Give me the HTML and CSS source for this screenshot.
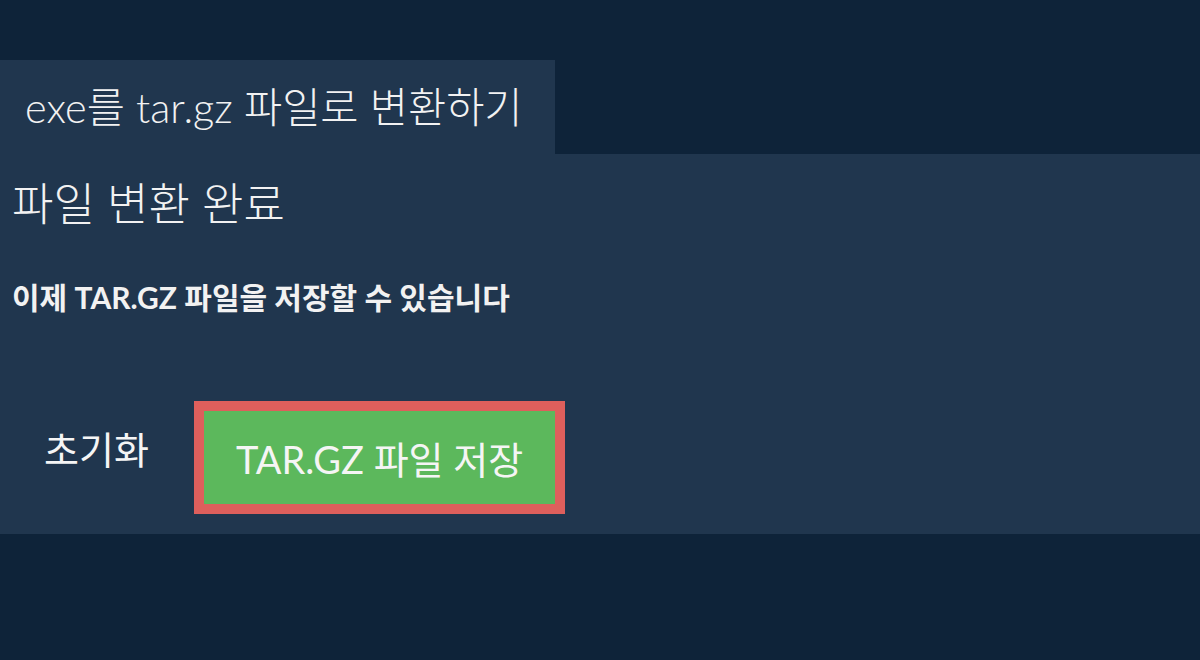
FILE: index.html
```html
<!DOCTYPE html>
<html lang="ko">
<head>
<meta charset="utf-8">
<title>exe를 tar.gz 파일로 변환하기</title>
<link rel="stylesheet" href="styles.css">
</head>
<body>
<div class="page">
  <div class="tab">exe를 tar.gz 파일로 변환하기</div>
  <div class="panel">
    <h1 class="heading">파일 변환 완료</h1>
    <p class="message">이제 TAR.GZ 파일을 저장할 수 있습니다</p>
    <div class="actions">
      <button class="btn btn-reset" type="button">초기화</button>
      <button class="btn btn-save" type="button">TAR.GZ 파일 저장</button>
    </div>
  </div>
</div>
</body>
</html>
```

FILE: styles.css
```css
html, body {
  margin: 0;
  padding: 0;
  background: #0e2339;
}
body {
  font-family: Lato, "Noto Sans CJK KR", sans-serif;
  color: #f2f2f2;
}
.page {
  padding-top: 60px;
}
.tab {
  display: inline-block;
  width: 555px;
  box-sizing: border-box;
  height: 94px;
  line-height: 94px;
  padding: 0 25px;
  font-size: 41.5px;
  font-weight: 300;
  background: #20364e;
  white-space: nowrap;
}
.panel {
  background: #20364e;
  padding: 24px 12px 20px 12px;
  display: flex;
  flex-direction: column;
  align-items: flex-start;
}
.heading {
  margin: 0;
  font-size: 45px;
  font-weight: 300;
  line-height: 52px;
}
.message {
  margin: 50px 0 0 0;
  font-size: 30px;
  font-weight: 700;
  line-height: 34px;
}
.actions {
  margin-top: 87px;
  display: flex;
  align-items: flex-start;
  gap: 13px;
}
.btn {
  font-family: Lato, "Noto Sans CJK KR", sans-serif;
  font-size: 38px;
  font-weight: 400;
  color: #f5f5f5;
  height: 93px;
  padding: 0 32px;
  border: 0;
  margin: 0;
  cursor: pointer;
  display: flex;
  align-items: center;
  justify-content: center;
  box-sizing: content-box;
}
.btn-reset {
  background: transparent;
}
.btn-save {
  background: #5cb85c;
  border: 10px solid #de5f5c;
}
```
